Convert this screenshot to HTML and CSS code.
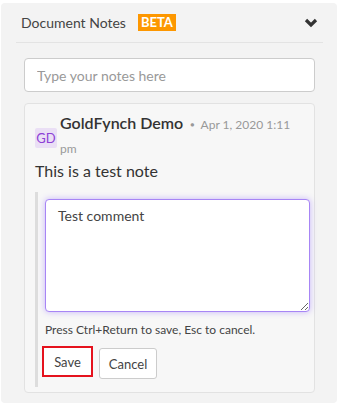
FILE: index.html
```html
<!DOCTYPE html>
<html lang="en">
<head>
    <meta charset="UTF-8">
    <meta name="viewport" content="width=device-width, initial-scale=1.0">
    <title>Document Notes</title>
    <link rel="stylesheet" href="styles.css">
</head>
<body>

<!-- Notes panel -->
<div class="notes-panel">
    <div class="notes-header">
        <span class="notes-title">Document Notes</span>
        <span class="beta">BETA</span>
        <svg class="chevron" width="14" height="10" viewBox="0 0 14 10">
            <polyline points="2,2 7,7 12,2" fill="none" stroke="#333" stroke-width="3.2"/>
        </svg>
    </div>

    <div class="notes-body">
        <input type="text" class="note-input" placeholder="Type your notes here" />

        <!-- Note card -->
        <div class="note-card">
            <div class="note-meta">
                <div class="avatar">GD</div>
                <div class="meta-text">
                    <span class="author">GoldFynch Demo</span>
                    <span class="date">Apr 1, 2020 1:11 pm</span>
                </div>
            </div>
            <div class="note-text">This is a test note</div>

            <div class="comment-box">
                <textarea class="comment-input">Test comment</textarea>
                <div class="hint">Press Ctrl+Return to save, Esc to cancel.</div>
                <div class="comment-actions">
                    <button class="btn btn-save">Save</button>
                    <button class="btn btn-cancel">Cancel</button>
                </div>
            </div>
        </div>
    </div>
</div>

</body>
</html>
```

FILE: styles.css
```css
body {
    font-family: Lato, "Open Sans", sans-serif;
    margin: 0;
    background-color: #ffffff;
    color: #333;
}
.notes-panel {
    margin: 3px 4px 0 1px;
    height: 400px;
    background-color: #f3f3f3;
    border-radius: 4px;
    box-sizing: border-box;
}
.notes-header {
    display: flex;
    align-items: center;
    height: 39px;
    margin: 0 14px 0 15px;
    padding-left: 5px;
    border-bottom: 1px solid #e3e3e3;
}
.notes-title {
    font-size: 14px;
    color: #444;
}
.beta {
    margin-left: 12px;
    background-color: #fd9700;
    color: white;
    font-weight: bold;
    font-size: 13px;
    line-height: 17px;
    padding: 0 3px;
}
.chevron {
    margin-left: auto;
    margin-right: 5px;
}
.notes-body {
    padding: 15px 22px 0 23px;
}
.note-input {
    display: block;
    width: 100%;
    height: 34px;
    box-sizing: border-box;
    border: 1px solid #ccc;
    border-radius: 4px;
    padding: 0 12px;
    font-family: Lato, sans-serif;
    font-size: 14px;
    color: #333;
    outline: none;
}
.note-input::placeholder {
    color: #999;
}
.note-card {
    margin-top: 11px;
    background-color: #f7f7f7;
    border: 1px solid #e2e2e2;
    border-radius: 4px;
    padding: 8px 4px 5px 10px;
}
.note-meta {
    display: flex;
    align-items: center;
}
.avatar {
    flex: none;
    width: 22px;
    height: 20px;
    margin-right: 3px;
    margin-top: 4px;
    background-color: #eadff5;
    color: #8d3fd6;
    border-radius: 2px;
    font-size: 13px;
    line-height: 20px;
    text-align: center;
}
.meta-text {
    max-width: 234px;
    line-height: 22px;
}
.author {
    font-size: 16px;
    font-weight: 600;
    color: #333;
}
.date {
    font-size: 12px;
    color: #999;
}
.date::before {
    content: "\25CF";
    font-size: 7px;
    margin: 0 6px 0 3px;
    vertical-align: 2px;
}
.note-text {
    font-size: 16px;
    line-height: 22px;
    margin-top: 0;
}
.comment-box {
    margin-top: 10px;
    border-left: 3px solid #ddd;
    padding: 7px 0 8px 7px;
}
.comment-input {
    display: block;
    width: 265px;
    height: 113px;
    box-sizing: border-box;
    border: 1px solid #a785f5;
    border-radius: 4px;
    box-shadow: 0 0 6px rgba(140, 100, 255, 0.45);
    padding: 6px 12px;
    font-family: Lato, sans-serif;
    font-size: 14px;
    line-height: 20px;
    color: #444;
    resize: vertical;
    outline: none;
}
.hint {
    margin-top: 10px;
    font-size: 12px;
    line-height: 16px;
    color: #444;
}
.comment-actions {
    display: flex;
    align-items: flex-start;
    margin-top: 8px;
    margin-left: -3px;
}
.btn {
    font-family: Lato, sans-serif;
    font-size: 13px;
    color: #444;
    background-color: white;
    border-radius: 3px;
    cursor: pointer;
    height: 31px;
    padding: 0;
}
.btn-save {
    width: 51px;
    border: 2px solid #e5121d;
    border-radius: 0;
}
.btn-cancel {
    width: 58px;
    margin-left: 6px;
    margin-top: 2px;
    border: 1px solid #ccc;
}
```
